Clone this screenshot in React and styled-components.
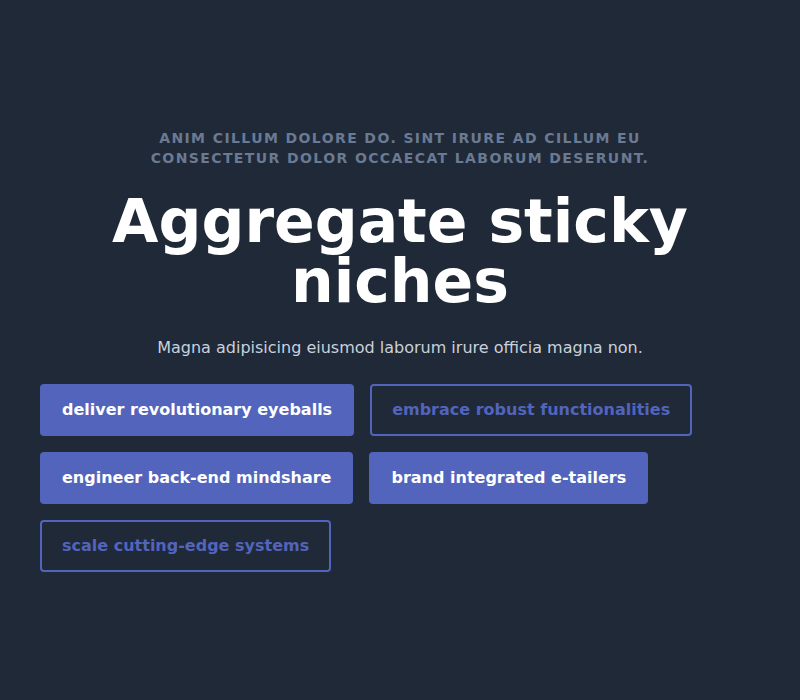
import React from "react";
import styled, { createGlobalStyle } from "styled-components";

const GlobalStyle = createGlobalStyle`
  * {
    box-sizing: border-box;
  }

  body {
    margin: 0;
    background-color: #1f2937;
    font-family: "DejaVu Sans", "Liberation Sans", sans-serif;
  }
`;

const actions = [
  { label: "deliver revolutionary eyeballs", filled: true },
  { label: "embrace robust functionalities", filled: false },
  { label: "engineer back-end mindshare", filled: true },
  { label: "brand integrated e-tailers", filled: true },
  { label: "scale cutting-edge systems", filled: false },
];

export default function App() {
  return (
    <>
      <GlobalStyle />
      <Page>
        <Hero>
          <Eyebrow>
            Anim cillum dolore do. Sint irure ad cillum eu consectetur dolor
            occaecat laborum deserunt.
          </Eyebrow>
          <Title>Aggregate sticky niches</Title>
          <Lead>Magna adipisicing eiusmod laborum irure officia magna non.</Lead>
          <Actions>
            {actions.map((item) => (
              <ActionButton key={item.label} $filled={item.filled}>
                {item.label}
              </ActionButton>
            ))}
          </Actions>
        </Hero>
      </Page>
    </>
  );
}

const Page = styled.main`
  min-height: 700px;
  display: flex;
  align-items: center;
  padding: 0 40px;
`;

const Hero = styled.section`
  width: 100%;
  display: flex;
  flex-direction: column;
  align-items: center;
  text-align: center;
`;

const Eyebrow = styled.p`
  margin: 0;
  max-width: 520px;
  font-size: 14px;
  line-height: 20px;
  font-weight: 700;
  letter-spacing: 0.1em;
  text-transform: uppercase;
  color: #6b7a93;
`;

const Title = styled.h1`
  margin: 23px 0 0;
  font-size: 60px;
  line-height: 60px;
  font-weight: 700;
  color: #ffffff;
`;

const Lead = styled.p`
  margin: 25px 0 0;
  font-size: 16px;
  line-height: 24px;
  color: #c9d1dd;
`;

const Actions = styled.div`
  margin-top: 24px;
  width: 100%;
  display: flex;
  flex-wrap: wrap;
  gap: 16px;
`;

const ActionButton = styled.button`
  padding: 12px 20px;
  line-height: 24px;
  border-radius: 4px;
  border: 2px solid ${({ $filled }) => ($filled ? "transparent" : "#5264bc")};
  background-color: ${({ $filled }) => ($filled ? "#5264bc" : "transparent")};
  color: ${({ $filled }) => ($filled ? "#ffffff" : "#5264bc")};
  font-family: inherit;
  font-size: 16px;
  font-weight: 700;
  cursor: pointer;
`;
